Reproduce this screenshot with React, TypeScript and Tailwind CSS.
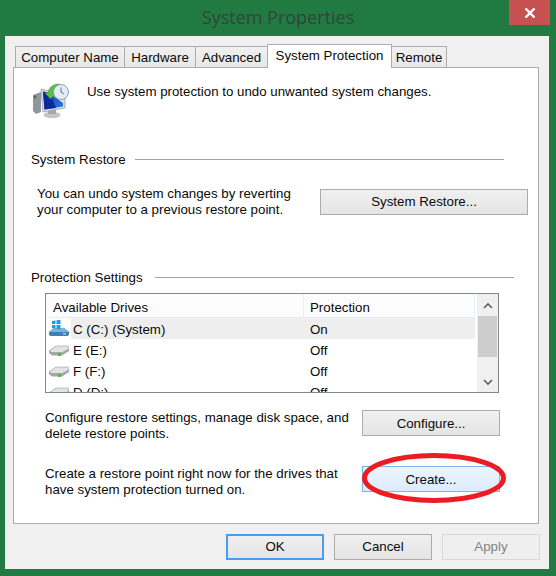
import type { ReactNode } from 'react';

const tabs = ['Computer Name', 'Hardware', 'Advanced', 'System Protection', 'Remote'];
const tabWidths: Record<string, string> = {
  'Computer Name': 'w-[110px]',
  Hardware: 'w-[72px]',
  Advanced: 'w-[73px]',
  'System Protection': 'w-[125px]',
  Remote: 'w-[56px]',
};

const drives = [
  { name: 'C (C:) (System)', state: 'On', system: true },
  { name: 'E (E:)', state: 'Off', system: false },
  { name: 'F (F:)', state: 'Off', system: false },
  { name: 'D (D:)', state: 'Off', system: false },
];

function RestoreIcon() {
  return (
    <svg width="38" height="38" viewBox="0 0 38 38" className="shrink-0">
      <defs>
        <linearGradient id="scr" x1="0" y1="0" x2="1" y2="1">
          <stop offset="0" stopColor="#0b2fa8" />
          <stop offset="1" stopColor="#2f7fe0" />
        </linearGradient>
      </defs>
      {/* tower */}
      <path d="M1 14 L9 11 L9 31 L4 33 L1 30 Z" fill="#8f979c" />
      <path d="M2 15 L4 14.5 L4 17 L2 17.5 Z" fill="#4e5a5e" />
      {/* stand */}
      <ellipse cx="20" cy="34" rx="8.5" ry="3.2" fill="#c2c6c8" />
      <path d="M16 27 H24 V33 H16 Z" fill="#a4aaad" />
      {/* monitor */}
      <path d="M9 8 L33 14 L33 27 L11 31 Z" fill="#d8dcdf" stroke="#9aa2a6" strokeWidth="0.8" />
      <path d="M11 10.5 L31 16 L31 25.5 L12.5 28.5 Z" fill="url(#scr)" />
      <path d="M11 10.5 L18 12.5 L24 27 L12.5 28.5 Z" fill="#0a2a9c" />
      <path d="M18 12.5 L31 16 L31 22 Z" fill="#dfeaf6" />
      {/* arrow */}
      <path d="M16 12 C17 5 24 1 30 4 L28 8 C24 6 22 8 21 12 L24 12 L18.5 18 L13 12 Z" fill="#62b84a" stroke="#3f9a35" strokeWidth="0.5" />
      {/* clock */}
      <circle cx="29" cy="11" r="7.5" fill="#e4edf4" stroke="#8ea3b3" strokeWidth="1" />
      <path d="M29 6.5 V11 L32 13" fill="none" stroke="#51677a" strokeWidth="0.9" />
    </svg>
  );
}

function DriveIcon({ system }: { system: boolean }) {
  if (system) {
    return (
      <svg width="22" height="19" viewBox="0 0 22 19">
        <path d="M1 13 L6 9 H16 L21 13 V15 Q21 17 19 17 H3 Q1 17 1 15 Z" fill="#3f7fb8" />
        <path d="M1 13 L6 9 H16 L21 13 Z" fill="#7fb2dc" />
        <rect x="15" y="14" width="3" height="1.5" fill="#9fe08a" />
        <path d="M4 2 L7.5 1.5 V5 H4 Z M8.5 1.3 L12.5 0.8 V5 H8.5 Z M4 6 H7.5 V9.5 L4 9 Z M8.5 6 H12.5 V10.5 L8.5 10 Z" fill="#1e9be8" />
      </svg>
    );
  }
  return (
    <svg width="22" height="14" viewBox="0 0 22 14">
      <path d="M1 8 L8 3 H20 L21 6 V8 L14 12.5 H4 L1 10 Z" fill="#a3a7a8" />
      <path d="M1 8 L8 3 H20 L21 6 L14 9.5 H4 Z" fill="#e2e4e5" stroke="#8b8f91" strokeWidth="0.5" />
      <rect x="10" y="10" width="3" height="3" fill="#5fae45" />
    </svg>
  );
}

function SectionLabel({ title, width, lineGap }: { title: string; width: string; lineGap: string }) {
  return (
    <div className={`flex items-center h-4 ml-[17px] ${width}`}>
      <span className="mt-[2px]">{title}</span>
      <div className={`flex-1 h-px bg-[#a0a0a0] ${lineGap}`} />
    </div>
  );
}

function Button({ children, className, variant }: { children: ReactNode; className: string; variant?: 'focus' | 'hot' | 'off' }) {
  const look =
    variant === 'focus'
      ? 'border-2 border-[#4a9cf0] bg-gradient-to-b from-[#f0f0f0] to-[#e5e5e5]'
      : variant === 'hot'
        ? 'border border-[#7eb4ea] bg-gradient-to-b from-[#ecf4fc] to-[#dcecfc]'
        : variant === 'off'
          ? 'border border-[#d9d9d9] bg-[#efefef] text-[#838383]'
          : 'border border-[#acacac] bg-gradient-to-b from-[#f0f0f0] to-[#e5e5e5]';
  return <div className={`flex items-center justify-center shrink-0 h-[26px] ${look} ${className}`}>{children}</div>;
}

function DriveList() {
  return (
    <div className="flex ml-[31px] mt-2 w-[454px] h-[100px] border border-[#828790] overflow-hidden bg-white">
      <div className="w-[429px] shrink-0">
        <div className="flex h-[24px] bg-[#fcfcfc] border-b border-[#e6edf6]">
          <div className="w-[258px] pl-[7px] leading-[27px] border-r border-[#e6edf6]">Available Drives</div>
          <div className="flex-1 pl-[6px] leading-[27px] border-r border-[#e6edf6]">Protection</div>
        </div>
        {drives.map((d) => (
          <div key={d.name} className="flex h-[21px] leading-[24px]">
            <div className="w-[25px] flex items-center justify-center shrink-0 bg-white">
              <DriveIcon system={d.system} />
            </div>
            <div className={`flex flex-1 pl-[2px] ${d.system ? 'bg-[#eeeeef]' : ''}`}>
              <div className="w-[237px]">{d.name}</div>
              <div>{d.state}</div>
            </div>
          </div>
        ))}
      </div>
      <div className="flex-1 flex flex-col items-center bg-[#f0f0f0] ml-[2px]">
        <div className="h-[22px] flex items-center justify-center">
          <svg width="10" height="7" viewBox="0 0 10 7">
            <path d="M1 6 L5 2 L9 6" fill="none" stroke="#606060" strokeWidth="1.6" />
          </svg>
        </div>
        <div className="w-[19px] h-[41px] bg-[#cdcdcd]" />
        <div className="flex-1 flex items-end pb-[6px]">
          <svg width="10" height="7" viewBox="0 0 10 7">
            <path d="M1 1 L5 5 L9 1" fill="none" stroke="#606060" strokeWidth="1.6" />
          </svg>
        </div>
      </div>
    </div>
  );
}

export default function App() {
  return (
    <div className="relative w-[556px] h-[576px] bg-[#217a42] overflow-hidden text-[13.3px] leading-4 text-[#0a0a0a] font-['Liberation_Sans',Arial,sans-serif]">
      {/* Title bar */}
      <div className="h-9 pb-[2px] flex items-center justify-center text-[18px] text-[#33443a] font-['Open_Sans',sans-serif]">
        System Properties
      </div>
      <div className="absolute top-0 right-[6px] w-[41px] h-[25px] bg-[#c75050] flex items-center justify-center">
        <svg width="12" height="10" viewBox="0 0 12 10">
          <path d="M1.5 0.5 L10.5 9.5 M10.5 0.5 L1.5 9.5" stroke="#fff" strokeWidth="2.4" />
        </svg>
      </div>

      {/* Dialog body */}
      <div className="ml-[5px] w-[544px] h-[533px] bg-[#f0f0f0] pl-2 pt-2">
        {/* Tabs */}
        <div className="flex items-end h-[23px] pl-[2px] relative z-10">
          {tabs.map((t) => {
            const selected = t === 'System Protection';
            return (
              <div
                key={t}
                className={`${tabWidths[t]} text-center border-[#acacac] ${
                  selected
                    ? 'h-[24px] -mb-px border border-b-0 bg-white leading-[21px] -ml-px'
                    : 'h-[21px] border border-b-0 bg-gradient-to-b from-[#f0f0f0] to-[#e8e8e8] leading-[22px] -ml-px first:ml-0'
                }`}
              >
                {t}
              </div>
            );
          })}
        </div>

        {/* Tab page */}
        <div className="w-[526px] h-[457px] border border-[#acacac] bg-white">
          <div className="flex items-start ml-[18px] pt-[13px] h-[50px]">
            <RestoreIcon />
            <div className="ml-[17px] mt-[3px]">Use system protection to undo unwanted system changes.</div>
          </div>

          <div className="mt-[33px]">
            <SectionLabel title="System Restore" width="w-[473px]" lineGap="ml-[9px]" />
          </div>
          <div className="flex items-center justify-between ml-[23px] w-[491px] mt-[19px]">
            <div>
              You can undo system changes by reverting
              <br />
              your computer to a previous restore point.
            </div>
            <Button className="w-[208px]">System Restore...</Button>
          </div>

          <div className="mt-[51px]">
            <SectionLabel title="Protection Settings" width="w-[483px]" lineGap="ml-[12px]" />
          </div>
          <DriveList />

          <div className="flex items-start justify-between ml-[31px] w-[455px] mt-[17px]">
            <div>
              Configure restore settings, manage disk space, and
              <br />
              delete restore points.
            </div>
            <Button className="w-[138px] pt-px">Configure...</Button>
          </div>
          <div className="flex items-start justify-between ml-[31px] w-[455px] mt-[24px]">
            <div>
              Create a restore point right now for the drives that
              <br />
              have system protection turned on.
            </div>
            <Button className="w-[138px] pt-px" variant="hot">
              Create...
            </Button>
          </div>
        </div>

        {/* Footer buttons */}
        <div className="flex justify-end gap-[10px] w-[527px] mt-[10px]">
          <Button className="w-[98px]" variant="focus">
            OK
          </Button>
          <Button className="w-[98px]">Cancel</Button>
          <Button className="w-[98px]" variant="off">
            Apply
          </Button>
        </div>
      </div>

      {/* Red annotation ring */}
      <svg className="absolute left-[358px] top-[449px]" width="152" height="58" viewBox="0 0 152 58">
        <ellipse cx="76" cy="29" rx="69.5" ry="22.5" fill="none" stroke="#ed1c24" strokeWidth="5" />
      </svg>
    </div>
  );
}
